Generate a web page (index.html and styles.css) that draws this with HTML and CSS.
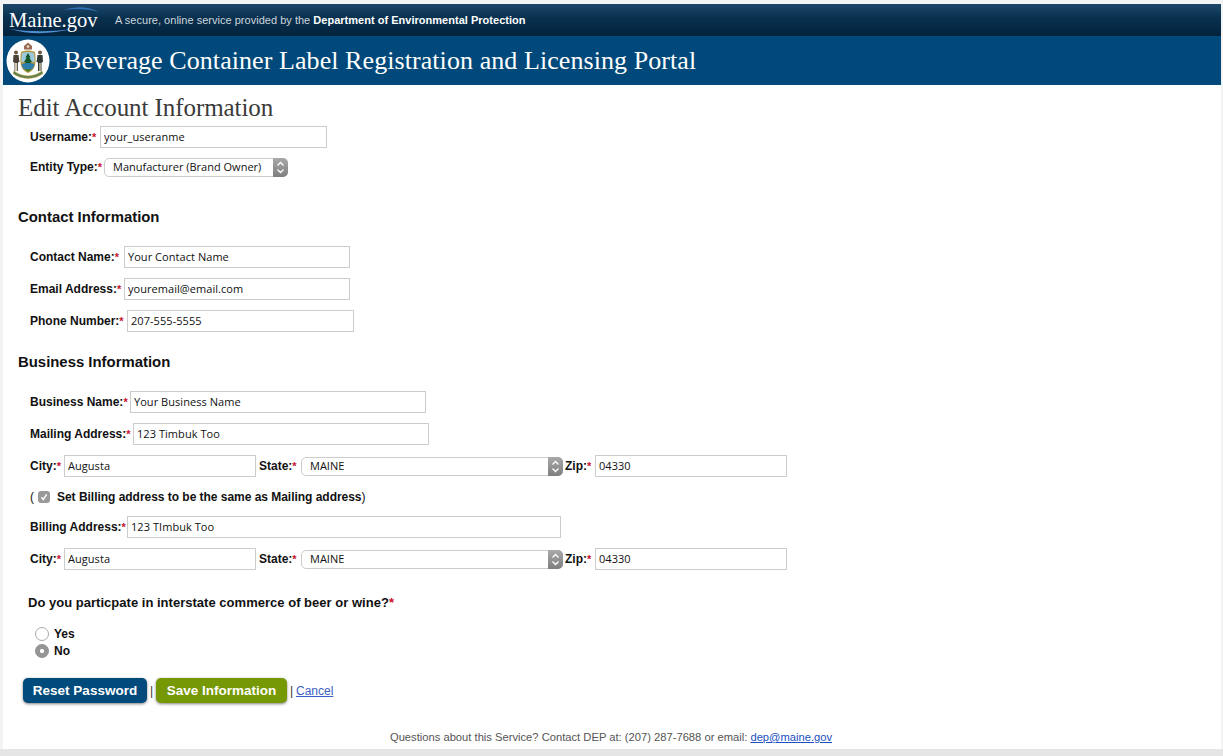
FILE: index.html
```html
<!DOCTYPE html>
<html lang="en">
<head>
<meta charset="utf-8">
<title>Edit Account Information</title>
<link rel="stylesheet" href="styles.css">
</head>
<body>
<div class="page">
  <header>
    <div class="topbar">
      <a class="logo">Maine.gov
        <svg class="swoosh" width="92" height="30" viewBox="0 0 92 30"><path d="M1 23C20 29 44 28 62 23C44 26 20 26 1 23Z" fill="#4f8fd0"/><path d="M55 4C66 0 80 0 90 6C80 3 66 2 55 4Z" fill="#2f6fb5"/></svg>
      </a>
      <p class="tagline">A secure, online service provided by the <b>Department of Environmental Protection</b></p>
    </div>
    <div class="titlebar">
      <svg class="seal" width="44" height="44" viewBox="0 0 44 44">
        <circle cx="22" cy="22" r="21.500" fill="#fff"/>
        <path d="M22 3.500l4 3.500v3.500h-8V7z" fill="#9a6a55"/>
        <circle cx="22" cy="7.500" r="1.300" fill="#e8e2cf"/>
        <path d="M15 13c4-2 10-2 14 0 1 6 1 12-1 16-2 3-4 4-6 5-2-1-4-2-6-5-2-4-2-10-1-16z" fill="#b79a3d"/>
        <path d="M16 14c4-1.500 8-1.500 12 0 .6 3 .8 6 .6 9H15.400c-.2-3 0-6 .6-9z" fill="#9cc9de"/>
        <path d="M22 14l2.600 4.500h-1.300l2.700 4.500h-1.700l2.200 4H17.500l2.200-4H18l2.700-4.500h-1.300z" fill="#14572b"/>
        <path d="M15.600 25c4-1.500 9-1.500 12.800 0-.3 2-1 3.500-2 5h-8.800c-1-1.500-1.700-3-2-5z" fill="#2f7fae"/>
        <path d="M18 30h8l-4 3z" fill="#3f7d3a"/>
        <circle cx="10" cy="13.500" r="2" fill="#6b5641"/>
        <path d="M7.500 16h5l1 7-1.500.5V32h-3.500v-8.500L7 23z" fill="#4a4036"/>
        <path d="M9 24h2.200v8H9z" fill="#cfc8b2"/>
        <circle cx="34" cy="13.500" r="2" fill="#6b5641"/>
        <path d="M31.500 16h5l.5 7-1.500.5V32H32v-8.500L30.500 23z" fill="#303a35"/>
        <path d="M33 24h2v8h-2z" fill="#a89f88"/>
        <path d="M8 32c9 6.500 19 6.500 28 0l1 2.500c-9 6.500-21 6.500-30 0z" fill="#63804c" stroke="#b79a3d" stroke-width=".5"/>
      </svg>
      <p class="portal">Beverage Container Label Registration and Licensing Portal</p>
    </div>
  </header>

  <main>
    <h1>Edit Account Information</h1>
    <form>
      <div class="row row-username">
        <label class="l70">Username:<i>*</i></label>
        <input class="w227" value="your_useranme">
      </div>
      <div class="row row-entity">
        <label class="l74">Entity Type:<i>*</i></label>
        <span class="select w184"><select><option>Manufacturer (Brand Owner)</option></select><svg width="15" height="19" viewBox="0 0 15 19"><path d="M4.500 7.500L7.500 4.500L10.500 7.500M4.500 11.500L7.500 14.500L10.500 11.500" fill="none" stroke="#fff" stroke-width="1.300"/></svg></span>
      </div>

      <h2 class="h-contact">Contact Information</h2>
      <div class="row">
        <label class="l94">Contact Name:<i>*</i></label>
        <input class="w226" value="Your Contact Name">
      </div>
      <div class="row">
        <label class="l94">Email Address:<i>*</i></label>
        <input class="w226" value="youremail@email.com">
      </div>
      <div class="row">
        <label class="l97">Phone Number:<i>*</i></label>
        <input class="w227" value="207-555-5555">
      </div>

      <h2 class="h-business">Business Information</h2>
      <div class="row">
        <label class="l100">Business Name:<i>*</i></label>
        <input class="w296" value="Your Business Name">
      </div>
      <div class="row">
        <label class="l103">Mailing Address:<i>*</i></label>
        <input class="w296" value="123 Timbuk Too">
      </div>
      <div class="row">
        <label class="l34">City:<i>*</i></label>
        <input class="w192" value="Augusta">
        <label class="state">State:<i>*</i></label>
        <span class="select w262"><select><option>MAINE</option></select><svg width="15" height="19" viewBox="0 0 15 19"><path d="M4.500 7.500L7.500 4.500L10.500 7.500M4.500 11.500L7.500 14.500L10.500 11.500" fill="none" stroke="#fff" stroke-width="1.300"/></svg></span>
        <label class="zip">Zip:<i>*</i></label>
        <input class="w192" value="04330">
      </div>
      <div class="same">
        <span class="paren">(</span>
        <span class="check"><svg width="12" height="12" viewBox="0 0 12 12"><path d="M3.500 6.200L5.300 8.500L8.700 3.300" fill="none" stroke="#fff" stroke-width="1.400"/></svg></span>
        <span class="same-text">Set Billing address to be the same as Mailing address<span class="paren">)</span></span>
      </div>
      <div class="row row-billing">
        <label class="l97">Billing Address:<i>*</i></label>
        <input class="w434" value="123 TImbuk Too">
      </div>
      <div class="row">
        <label class="l34">City:<i>*</i></label>
        <input class="w192" value="Augusta">
        <label class="state">State:<i>*</i></label>
        <span class="select w262"><select><option>MAINE</option></select><svg width="15" height="19" viewBox="0 0 15 19"><path d="M4.500 7.500L7.500 4.500L10.500 7.500M4.500 11.500L7.500 14.500L10.500 11.500" fill="none" stroke="#fff" stroke-width="1.300"/></svg></span>
        <label class="zip">Zip:<i>*</i></label>
        <input class="w192" value="04330">
      </div>

      <p class="question">Do you particpate in interstate commerce of beer or wine?<i>*</i></p>
      <div class="radios">
        <div class="radio-row"><span class="radio"></span>Yes</div>
        <div class="radio-row"><span class="radio on"></span>No</div>
      </div>

      <div class="actions">
        <button type="button" class="btn btn-blue">Reset Password</button>
        <span class="sep">|</span>
        <button type="button" class="btn btn-green">Save Information</button>
        <span class="sep">|</span>
        <a class="cancel" href="#">Cancel</a>
      </div>
    </form>
  </main>

  <footer>Questions about this Service? Contact DEP at: (207) 287-7688 or email: <a href="#">dep@maine.gov</a></footer>
</div>
<div class="bottom"></div>
</body>
</html>
```

FILE: styles.css
```css
* { box-sizing: border-box; }
html, body { margin: 0; padding: 0; height: 756px; overflow: hidden; }
body {
  background: #f3f3f3;
  font-family: "Liberation Sans", Arial, sans-serif;
  padding-top: 4px;
  display: flex;
  flex-direction: column;
}
p { margin: 0; }
.page {
  flex: 1;
  margin: 0 2px 0 3px;
  background: #fff;
  display: flex;
  flex-direction: column;
}
.bottom { height: 7px; background: #e5e5e5; }

.topbar {
  height: 32px;
  background: linear-gradient(#1d4669, #08304e 45%, #02233d);
  display: flex;
  align-items: center;
  padding-left: 6px;
}
.logo {
  position: relative;
  width: 106px;
  font-family: "Liberation Serif", serif;
  font-size: 20.6px;
  color: #fff;
  line-height: 30px;
}
.swoosh { position: absolute; left: 0; top: 1px; }
.tagline { font-size: 11px; color: #cfd6dc; letter-spacing: .02px; }
.tagline b { color: #fff; }
.titlebar {
  height: 49px;
  background: #00497a;
  display: flex;
  align-items: center;
  padding-left: 3px;
}
.seal { flex: none; }
.portal {
  margin-left: 14px;
  font-family: "Liberation Serif", serif;
  font-size: 26px;
  letter-spacing: .07px;
  color: #fff;
}

main { flex: 1; padding: 0 0 0 15px; }
h1 {
  margin: 8px 0 0;
  font-family: "Liberation Serif", serif;
  font-weight: 400;
  font-size: 25px;
  line-height: 29px;
  letter-spacing: -.07px;
  color: #3a3a3a;
}
h2 {
  margin: 0;
  font-size: 14.9px;
  line-height: 18px;
  color: #111;
}
.h-contact { margin-top: 30px; margin-bottom: 20px; }
.h-business { margin-top: 21px; margin-bottom: 20px; }

.row {
  display: flex;
  align-items: center;
  height: 22px;
  margin: 0 0 10px 12px;
}
.row-username { margin-bottom: 8px; margin-top: 4px; }
.row-entity { margin-bottom: 0; }
.row-billing { margin-top: 8px; margin-bottom: 10px; }
label {
  flex: none;
  font-size: 12px;
  font-weight: 700;
  color: #111;
  white-space: nowrap;
}
.l34 { width: 34px; }
.l70 { width: 70px; }
.l74 { width: 74px; }
.l94 { width: 94px; }
.l97 { width: 97px; }
.l100 { width: 100px; }
.l103 { width: 103px; }
.state { width: 42px; margin-left: 3px; }
.zip { width: 30px; margin-left: 2px; }
i { color: #c8102e; font-style: normal; font-weight: 700; font-size: 11px; }

input {
  height: 22px;
  border: 1px solid #ccc;
  padding: 0 3px 2px;
  font-family: "Open Sans", "DejaVu Sans", sans-serif;
  font-size: 11px;
  letter-spacing: .05px;
  color: #111;
  background: #fff;
  border-radius: 0;
  outline: 0;
}
.w192 { width: 192px; }
.w226 { width: 226px; }
.w227 { width: 227px; }
.w296 { width: 296px; }
.w434 { width: 434px; }

.select {
  position: relative;
  display: block;
  flex: none;
  height: 19px;
}
.w184 { width: 184px; }
.w262 { width: 262px; }
.select select {
  appearance: none;
  -webkit-appearance: none;
  display: block;
  width: 100%;
  height: 100%;
  border: 1px solid #ccc;
  border-radius: 5px;
  background: #fff;
  padding: 0 18px 2px 8px;
  font-family: "Open Sans", "DejaVu Sans", sans-serif;
  font-size: 11px;
  color: #111;
}
.select svg {
  position: absolute;
  right: 0;
  top: 0;
  background: linear-gradient(#a9a9a9, #7f7f7f);
  border-radius: 0 5px 5px 0;
}

.same {
  display: flex;
  align-items: center;
  height: 19px;
  margin: 0 0 10px 12px;
  font-size: 12px;
  font-weight: 700;
  color: #111;
}
.same-text { letter-spacing: -.03px; }
.paren { font-weight: 400; }
.check {
  width: 12px;
  height: 12px;
  margin-left: 4px;
  margin-right: 7px;
  border-radius: 3px;
  background: #9a9a9a;
  display: block;
}
.check svg { display: block; }

.question {
  margin: 25px 0 0 10px;
  font-size: 13px;
  line-height: 16px;
  font-weight: 700;
  letter-spacing: .02px;
  color: #111;
}
.question i { font-size: 13px; }
.radios { margin: 14px 0 0 17px; }
.radio-row {
  display: flex;
  align-items: center;
  height: 17px;
  font-size: 12px;
  font-weight: 700;
  color: #111;
}
.radio {
  width: 14px;
  height: 14px;
  margin-right: 5px;
  border-radius: 50%;
  border: 1px solid #aaa;
  background: #fff;
}
.radio.on {
  border-color: #8f8f8f;
  background: radial-gradient(circle, #fff 0 1.800px, #959595 2.400px);
}

.actions {
  display: flex;
  align-items: center;
  margin: 19px 0 0 5px;
  height: 25px;
  font-size: 12px;
}
.btn {
  height: 25px;
  border: 0;
  border-radius: 5px;
  color: #fff;
  font-family: "Liberation Sans", Arial, sans-serif;
  font-size: 13.5px;
  font-weight: 700;
  padding: 0;
  box-shadow: 0 1px 3px rgba(0, 0, 0, .5);
}
.btn-blue { width: 124px; background: #004a7c; }
.btn-green { width: 131px; background: #769805; }
.sep { width: 9px; text-align: center; color: #333; font-weight: 400; }
.cancel { color: #3b5fc4; }

footer {
  height: 24px;
  padding: 4px 2px 0 0;
  text-align: center;
  font-size: 11.2px;
  line-height: 16px;
  color: #555;
}
footer a { color: #1a4fc0; }
```
